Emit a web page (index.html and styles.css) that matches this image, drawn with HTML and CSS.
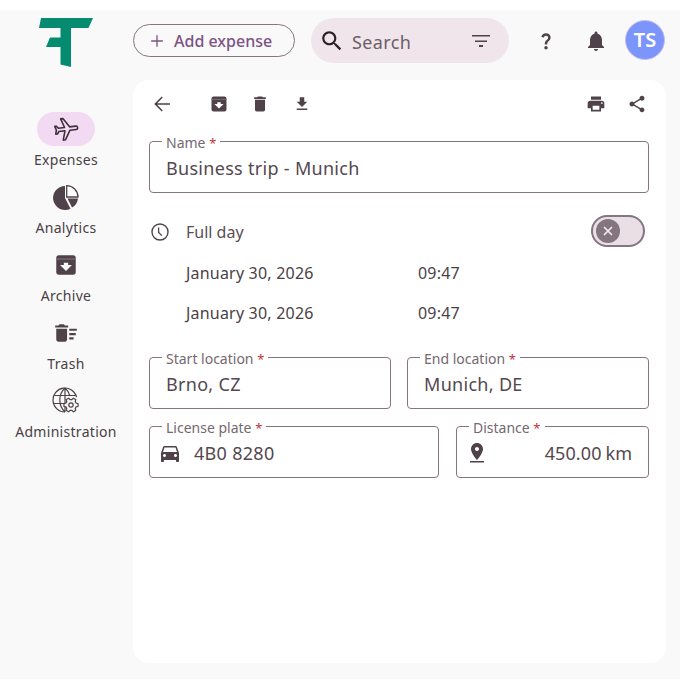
FILE: index.html
```html
<!DOCTYPE html>
<html lang="en">
<head>
    <meta charset="UTF-8">
    <meta name="viewport" content="width=device-width, initial-scale=1.0">
    <title>Expenses</title>
    <link rel="stylesheet" href="styles.css">
</head>
<body>
<div class="app">

    <aside class="sidebar">
        <svg class="logo" width="54" height="49" viewBox="39 18 54 49">
            <polygon points="41,18 93,18 88.5,28 71,28 71,67 60.5,64.500 60.5,47 46,47 50,37.5 60.5,37.5 60.5,28 39,28" fill="#058b6f"/>
        </svg>

        <nav class="nav">
            <a class="nav-item">
                <span class="nav-icon active">
                    <svg width="27" height="27" viewBox="0 0 24 24"><path transform="rotate(83 12 12)" d="M21 16v-2l-8-5V3.5c0-.83-.67-1.5-1.5-1.5S10 2.67 10 3.5V9l-8 5v2l8-2.5V19l-2 1.5V22l3.5-1 3.5 1v-1.5L13 19v-5.500l8 2.5z" fill="none" stroke="#3d2f3a" stroke-width="1.4" stroke-linejoin="round"/></svg>
                </span>
                <span class="nav-label">Expenses</span>
            </a>
            <a class="nav-item">
                <span class="nav-icon">
                    <svg width="28" height="28" viewBox="0 0 28 28">
                        <path d="M13 3A12 12 0 1 0 18.5 25.700L13 15z" fill="#4f4349"/>
                        <path d="M14.700 2.700a11.500 11.500 0 0 1 11.300 11.300h-11.300z" fill="#fff" stroke="#4f4349" stroke-width="1.300"/>
                        <path d="M15.500 15.500H26a11.500 11.500 0 0 1-6 9z" fill="#4f4349"/>
                    </svg>
                </span>
                <span class="nav-label">Analytics</span>
            </a>
            <a class="nav-item">
                <span class="nav-icon">
                    <svg width="26" height="26" viewBox="0 0 24 24">
                        <rect x="3" y="3" width="18" height="18" rx="2.500" fill="#4f4349"/>
                        <path d="M3 6.500h18" stroke="#8b7f85" stroke-width=".8"/>
                        <path d="M12 17.500L6.500 12H10v-2h4v2h3.500z" fill="#f9f9f9"/>
                    </svg>
                </span>
                <span class="nav-label">Archive</span>
            </a>
            <a class="nav-item">
                <span class="nav-icon">
                    <svg width="26" height="26" viewBox="0 0 24 24"><path d="M15 16h4v2h-4zm0-8h7v2h-7zm0 4h6v2h-6zM3 18c0 1.100.9 2 2 2h6c1.100 0 2-.9 2-2V8H3v10zM14 5h-3l-1-1H6L5 5H2v2h12z" fill="#4f4349"/></svg>
                </span>
                <span class="nav-label">Trash</span>
            </a>
            <a class="nav-item">
                <span class="nav-icon">
                    <svg width="28" height="28" viewBox="0 0 28 28" fill="none" stroke="#4f4349" stroke-width="1.200">
                        <path d="M13 25A12 12 0 1 1 24.600 10"/>
                        <path d="M13 1c-3.500 3.200-5.200 7.200-5.200 12s1.700 8.800 5.200 12M13 1c2.700 2.400 4.300 5 5 8M13 1v24M2.200 8.500h21.600M1.800 16.500H12"/>
                        <polygon points="24,16 26.070,16.630 26.070,19.370 24,20 23.230,21.330 23.720,23.440 21.350,24.810 19.770,23.330 18.230,23.330 16.650,24.810 14.280,23.440 14.770,21.330 14,20 11.930,19.370 11.930,16.630 14,16 14.770,14.670 14.280,12.560 16.650,11.190 18.230,12.670 19.770,12.670 21.350,11.190 23.720,12.560 23.230,14.670" fill="#f9f9f9"/>
                        <circle cx="19" cy="18" r="2.200"/>
                    </svg>
                </span>
                <span class="nav-label">Administration</span>
            </a>
        </nav>
    </aside>

    <div class="content">
        <header class="topbar">
            <button class="add-btn">
                <svg width="20" height="20" viewBox="0 0 24 24"><path d="M19 12.800h-6.200V19h-1.600v-6.200H5v-1.600h6.200V5h1.600v6.200H19z" fill="#7d5284"/></svg>
                Add expense
            </button>
            <div class="search">
                <svg width="26" height="26" viewBox="0 0 24 24"><path d="M15.500 14h-.79l-.28-.27C15.410 12.590 16 11.110 16 9.500 16 5.910 13.090 3 9.500 3S3 5.910 3 9.500 5.910 16 9.500 16c1.610 0 3.090-.59 4.230-1.570l.27.28v.79l5 4.990L20.490 19l-4.990-5zm-6 0C7.010 14 5 11.990 5 9.500S7.010 5 9.500 5 14 7.010 14 9.500 11.990 14 9.500 14z" fill="#2b2228"/></svg>
                <span class="search-text">Search</span>
                <svg width="24" height="24" viewBox="0 0 24 24"><path d="M10 18h4v-2h-4v2zM3 6v1.600h18V6H3zm3 7h12v-1.600H6V13z" fill="#4f4349"/></svg>
            </div>
            <svg class="help" width="24" height="24" viewBox="0 0 24 24"><path d="M11.070 12.850c.77-1.390 2.250-2.210 3.110-3.440.91-1.290.4-3.700-2.180-3.700-1.690 0-2.520 1.280-2.870 2.340L6.540 6.960C7.250 4.830 9.180 3 11.990 3c2.350 0 3.960 1.070 4.780 2.410.7 1.150 1.110 3.300.03 4.900-1.200 1.770-2.350 2.310-2.970 3.450-.25.46-.35.76-.35 2.240h-2.890c-.01-.78-.13-2.050.48-3.150zM14 20c0 1.100-.9 2-2 2s-2-.9-2-2 .9-2 2-2 2 .9 2 2z" fill="#4f4349" transform="translate(1.800 1.800) scale(.85)"/></svg>
            <svg class="bell" width="24" height="24" viewBox="0 0 24 24"><path d="M12 22c1.100 0 2-.9 2-2h-4c0 1.100.89 2 2 2zm6-6v-5c0-3.070-1.640-5.640-4.500-6.320V4c0-.83-.67-1.500-1.500-1.500s-1.500.67-1.500 1.500v.68C7.630 5.360 6 7.920 6 11v5l-2 2v1h16v-1l-2-2z" fill="#4f4349"/></svg>
            <div class="avatar">TS</div>
        </header>

        <main class="card">
            <div class="toolbar">
                <svg class="tool-back" width="24" height="24" viewBox="0 0 24 24"><path d="M20 11.200H7.200l5.600-5.600L11.700 4.500 4.200 12l7.500 7.500 1.100-1.100-5.600-5.600H20z" fill="#4f4349"/></svg>
                <svg class="tool" width="20" height="20" viewBox="0 0 24 24">
                    <rect x="3" y="3" width="18" height="18" rx="2.500" fill="#4f4349"/>
                    <path d="M3 6.500h18" stroke="#8b7f85" stroke-width=".8"/>
                    <path d="M12 17.500L6.500 12H10v-2h4v2h3.500z" fill="#fff"/>
                </svg>
                <svg class="tool tool-trash" width="20" height="20" viewBox="0 0 24 24"><path d="M6 19c0 1.100.9 2 2 2h8c1.100 0 2-.9 2-2V7H6v12zM19 4h-3.500l-1-1h-5l-1 1H5v2h14V4z" fill="#4f4349"/></svg>
                <svg class="tool" width="18" height="18" viewBox="0 0 24 24"><path d="M19 9h-4V3H9v6H5l7 7 7-7zM5 18v2h14v-2H5z" fill="#4f4349"/></svg>
                <span class="spacer"></span>
                <svg class="tool" width="20" height="20" viewBox="0 0 24 24"><path d="M19 8H5c-1.660 0-3 1.340-3 3v6h4v4h12v-4h4v-6c0-1.660-1.340-3-3-3zm-3 11H8v-5h8v5zm3-7c-.55 0-1-.45-1-1s.45-1 1-1 1 .45 1 1-.45 1-1 1zm-1-9H6v4h12V3z" fill="#4f4349"/></svg>
                <svg class="tool" width="20" height="20" viewBox="0 0 24 24"><path d="M18 16.080c-.76 0-1.440.3-1.960.77L8.910 12.700c.05-.23.09-.46.09-.7s-.04-.47-.09-.7l7.050-4.110c.54.5 1.250.81 2.040.81 1.660 0 3-1.340 3-3s-1.340-3-3-3-3 1.340-3 3c0 .24.04.47.09.7L8.040 9.810C7.500 9.310 6.790 9 6 9c-1.660 0-3 1.340-3 3s1.340 3 3 3c.79 0 1.500-.31 2.040-.81l7.120 4.160c-.05.21-.08.43-.08.65 0 1.610 1.310 2.920 2.920 2.920s2.920-1.310 2.920-2.920-1.310-2.920-2.920-2.920z" fill="#4f4349"/></svg>
            </div>

            <div class="field field-name">
                <label>Name <span class="req">*</span></label>
                <span class="value">Business trip - Munich</span>
            </div>

            <div class="fullday">
                <svg class="clock" width="22" height="22" viewBox="0 0 24 24"><path d="M12 2.500a9.500 9.500 0 1 0 0 19 9.500 9.500 0 0 0 0-19zm0 1.500a8 8 0 1 1 0 16 8 8 0 0 1 0-16z" fill="#4f4349"/><path d="M10.500 7v5.500l3.500 3.500" fill="none" stroke="#4f4349" stroke-width="1.400"/></svg>
                <span class="fullday-text">Full day</span>
                <div class="toggle">
                    <span class="thumb">
                        <svg width="12" height="12" viewBox="0 0 12 12"><path d="M2 2l8 8M10 2l-8 8" stroke="#f4ecf0" stroke-width="1.700"/></svg>
                    </span>
                </div>
            </div>

            <div class="date-row"><span class="date">January 30, 2026</span><span class="time">09:47</span></div>
            <div class="date-row"><span class="date">January 30, 2026</span><span class="time">09:47</span></div>

            <div class="field-row first-row">
                <div class="field grow">
                    <label>Start location <span class="req">*</span></label>
                    <span class="value">Brno, CZ</span>
                </div>
                <div class="field grow">
                    <label>End location <span class="req">*</span></label>
                    <span class="value">Munich, DE</span>
                </div>
            </div>

            <div class="field-row second-row">
                <div class="field field-plate">
                    <label>License plate <span class="req">*</span></label>
                    <svg class="field-icon" width="24" height="24" viewBox="0 0 24 24"><path d="M18.920 6.010C18.720 5.420 18.160 5 17.500 5h-11c-.66 0-1.210.42-1.420 1.010L3 12v8c0 .55.45 1 1 1h1c.55 0 1-.45 1-1v-1h12v1c0 .55.45 1 1 1h1c.55 0 1-.45 1-1v-8l-2.080-5.990zM6.500 16c-.83 0-1.500-.67-1.500-1.500S5.670 13 6.500 13s1.500.67 1.500 1.500S7.330 16 6.500 16zm11 0c-.83 0-1.500-.67-1.500-1.500s.67-1.500 1.500-1.500 1.500.67 1.500 1.500-.67 1.500-1.500 1.500zM5 11l1.500-4.500h11L19 11H5z" fill="#4f4349"/></svg>
                    <span class="value plate">4B0 8280</span>
                </div>
                <div class="field field-distance">
                    <label>Distance <span class="req">*</span></label>
                    <svg class="field-icon" width="24" height="24" viewBox="0 0 24 24"><path d="M18 8c0-3.310-2.690-6-6-6S6 4.690 6 8c0 4.500 6 11 6 11s6-6.500 6-11zm-8 0c0-1.100.9-2 2-2s2 .9 2 2-.89 2-2 2c-1.100 0-2-.9-2-2zM5 20v1.500h14V20H5z" fill="#4f4349"/></svg>
                    <span class="value distance">450.00<span class="unit">km</span></span>
                </div>
            </div>
        </main>
    </div>

</div>
</body>
</html>
```

FILE: styles.css
```css
body {
    margin: 0;
    background-color: #fff;
    font-family: "Noto Sans", "Open Sans", sans-serif;
    color: #4f4349;
}
.app {
    display: flex;
    margin-top: 10px;
    height: 669px;
    background-color: #f9f9f9;
}
.sidebar {
    width: 133px;
    flex-shrink: 0;
    display: flex;
    flex-direction: column;
    align-items: center;
}
.logo {
    margin-top: 8px;
    margin-right: 1px;
    display: block;
}
.nav {
    margin-top: 45px;
    display: flex;
    flex-direction: column;
    align-items: center;
    gap: 4px;
}
.nav-item {
    display: flex;
    flex-direction: column;
    align-items: center;
    height: 64px;
}
.nav-icon {
    width: 58px;
    height: 34px;
    border-radius: 17px;
    display: flex;
    align-items: center;
    justify-content: center;
}
.nav-icon.active {
    background-color: #f3daf3;
}
.nav-label {
    margin-top: 5px;
    margin-right: 1px;
    font-size: 14px;
    line-height: 18px;
    color: #4a3f45;
    white-space: nowrap;
    letter-spacing: 0.3px;
}
.content {
    flex: 1;
    min-width: 0;
    padding-right: 14px;
    padding-bottom: 16px;
    display: flex;
    flex-direction: column;
}
.topbar {
    height: 70px;
    flex-shrink: 0;
    display: flex;
    align-items: flex-start;
}
.add-btn {
    margin-top: 14px;
    width: 162px;
    height: 33px;
    display: flex;
    align-items: center;
    gap: 7px;
    padding: 0 0 0 13px;
    background: none;
    border: 1px solid #85757f;
    border-radius: 17px;
    font-family: inherit;
    font-size: 16px;
    font-weight: 500;
    color: #7d5284;
    cursor: pointer;
}
.search {
    margin-top: 8px;
    margin-left: 16px;
    width: 198px;
    height: 45px;
    box-sizing: border-box;
    padding: 0 16px 0 8px;
    border-radius: 23px;
    background-color: #f1e5ec;
    display: flex;
    align-items: center;
}
.search-text {
    flex: 1;
    margin-left: 7px;
    padding-top: 2px;
    font-size: 18px;
    color: #6b5e66;
    letter-spacing: 0.4px;
}
.help {
    margin-top: 19px;
    margin-left: 25px;
}
.bell {
    margin-top: 19px;
    margin-left: 26px;
}
.avatar {
    margin-top: 10px;
    margin-left: 17px;
    width: 40px;
    height: 40px;
    box-sizing: border-box;
    border: 1px solid #c9bdf0;
    border-radius: 50%;
    background-color: #7b95fb;
    color: #fff;
    font-size: 20px;
    font-weight: 600;
    line-height: 38px;
    text-align: center;
}
.card {
    flex: 1;
    background-color: #fff;
    border-radius: 16px;
    padding: 0 17px 0 16px;
}
.toolbar {
    height: 48px;
    margin-bottom: 13px;
    display: flex;
    align-items: center;
}
.tool-back {
    margin-left: 1px;
    margin-right: 35px;
}
.toolbar .tool {
    margin-right: 21px;
}
.toolbar .tool-trash {
    margin-right: 23px;
}
.toolbar .tool:last-child {
    margin-right: 2px;
}
.spacer {
    flex: 1;
}
.field {
    position: relative;
    box-sizing: border-box;
    height: 52px;
    border: 1px solid #85757f;
    border-radius: 4px;
    display: flex;
    align-items: center;
    padding: 2px 16px 0;
}
.field label {
    position: absolute;
    top: -7px;
    left: 12px;
    padding: 0 4px;
    background-color: #fff;
    font-size: 14px;
    line-height: 15px;
    color: #75686f;
    white-space: nowrap;
}
.req {
    color: #c0313a;
    font-size: 13px;
}
.value {
    font-size: 18px;
    color: #544850;
    letter-spacing: 0.3px;
}
.fullday {
    height: 32px;
    margin-top: 22px;
    display: flex;
    align-items: center;
    padding-right: 4px;
}
.clock {
    margin-top: 1px;
}
.fullday-text {
    flex: 1;
    margin-left: 15px;
    padding-top: 2px;
    font-size: 16px;
    color: #5a4d55;
}
.toggle {
    width: 54px;
    height: 32px;
    box-sizing: border-box;
    border: 2px solid #85757f;
    border-radius: 16px;
    background-color: #e9dfe5;
    display: flex;
    align-items: center;
    padding-left: 3px;
}
.thumb {
    width: 24px;
    height: 24px;
    border-radius: 50%;
    background-color: #85757f;
    display: flex;
    align-items: center;
    justify-content: center;
}
.date-row {
    height: 40px;
    margin-left: 37px;
    display: flex;
    align-items: center;
    font-size: 16px;
    letter-spacing: 0.2px;
    color: #4a3f45;
}
.fullday + .date-row {
    margin-top: 6px;
}
.date {
    width: 232px;
}
.field-row {
    display: flex;
    gap: 16px;
}
.first-row {
    margin-top: 24px;
}
.second-row {
    margin-top: 17px;
    gap: 17px;
}
.grow {
    flex: 1;
}
.field-plate {
    width: 290px;
    padding-left: 8px;
}
.field-distance {
    flex: 1;
    padding-left: 8px;
}
.plate {
    margin-left: 12px;
}
.distance {
    margin-left: auto;
    letter-spacing: 0.1px;
}
.unit {
    margin-left: 4px;
    letter-spacing: 0;
}
```
